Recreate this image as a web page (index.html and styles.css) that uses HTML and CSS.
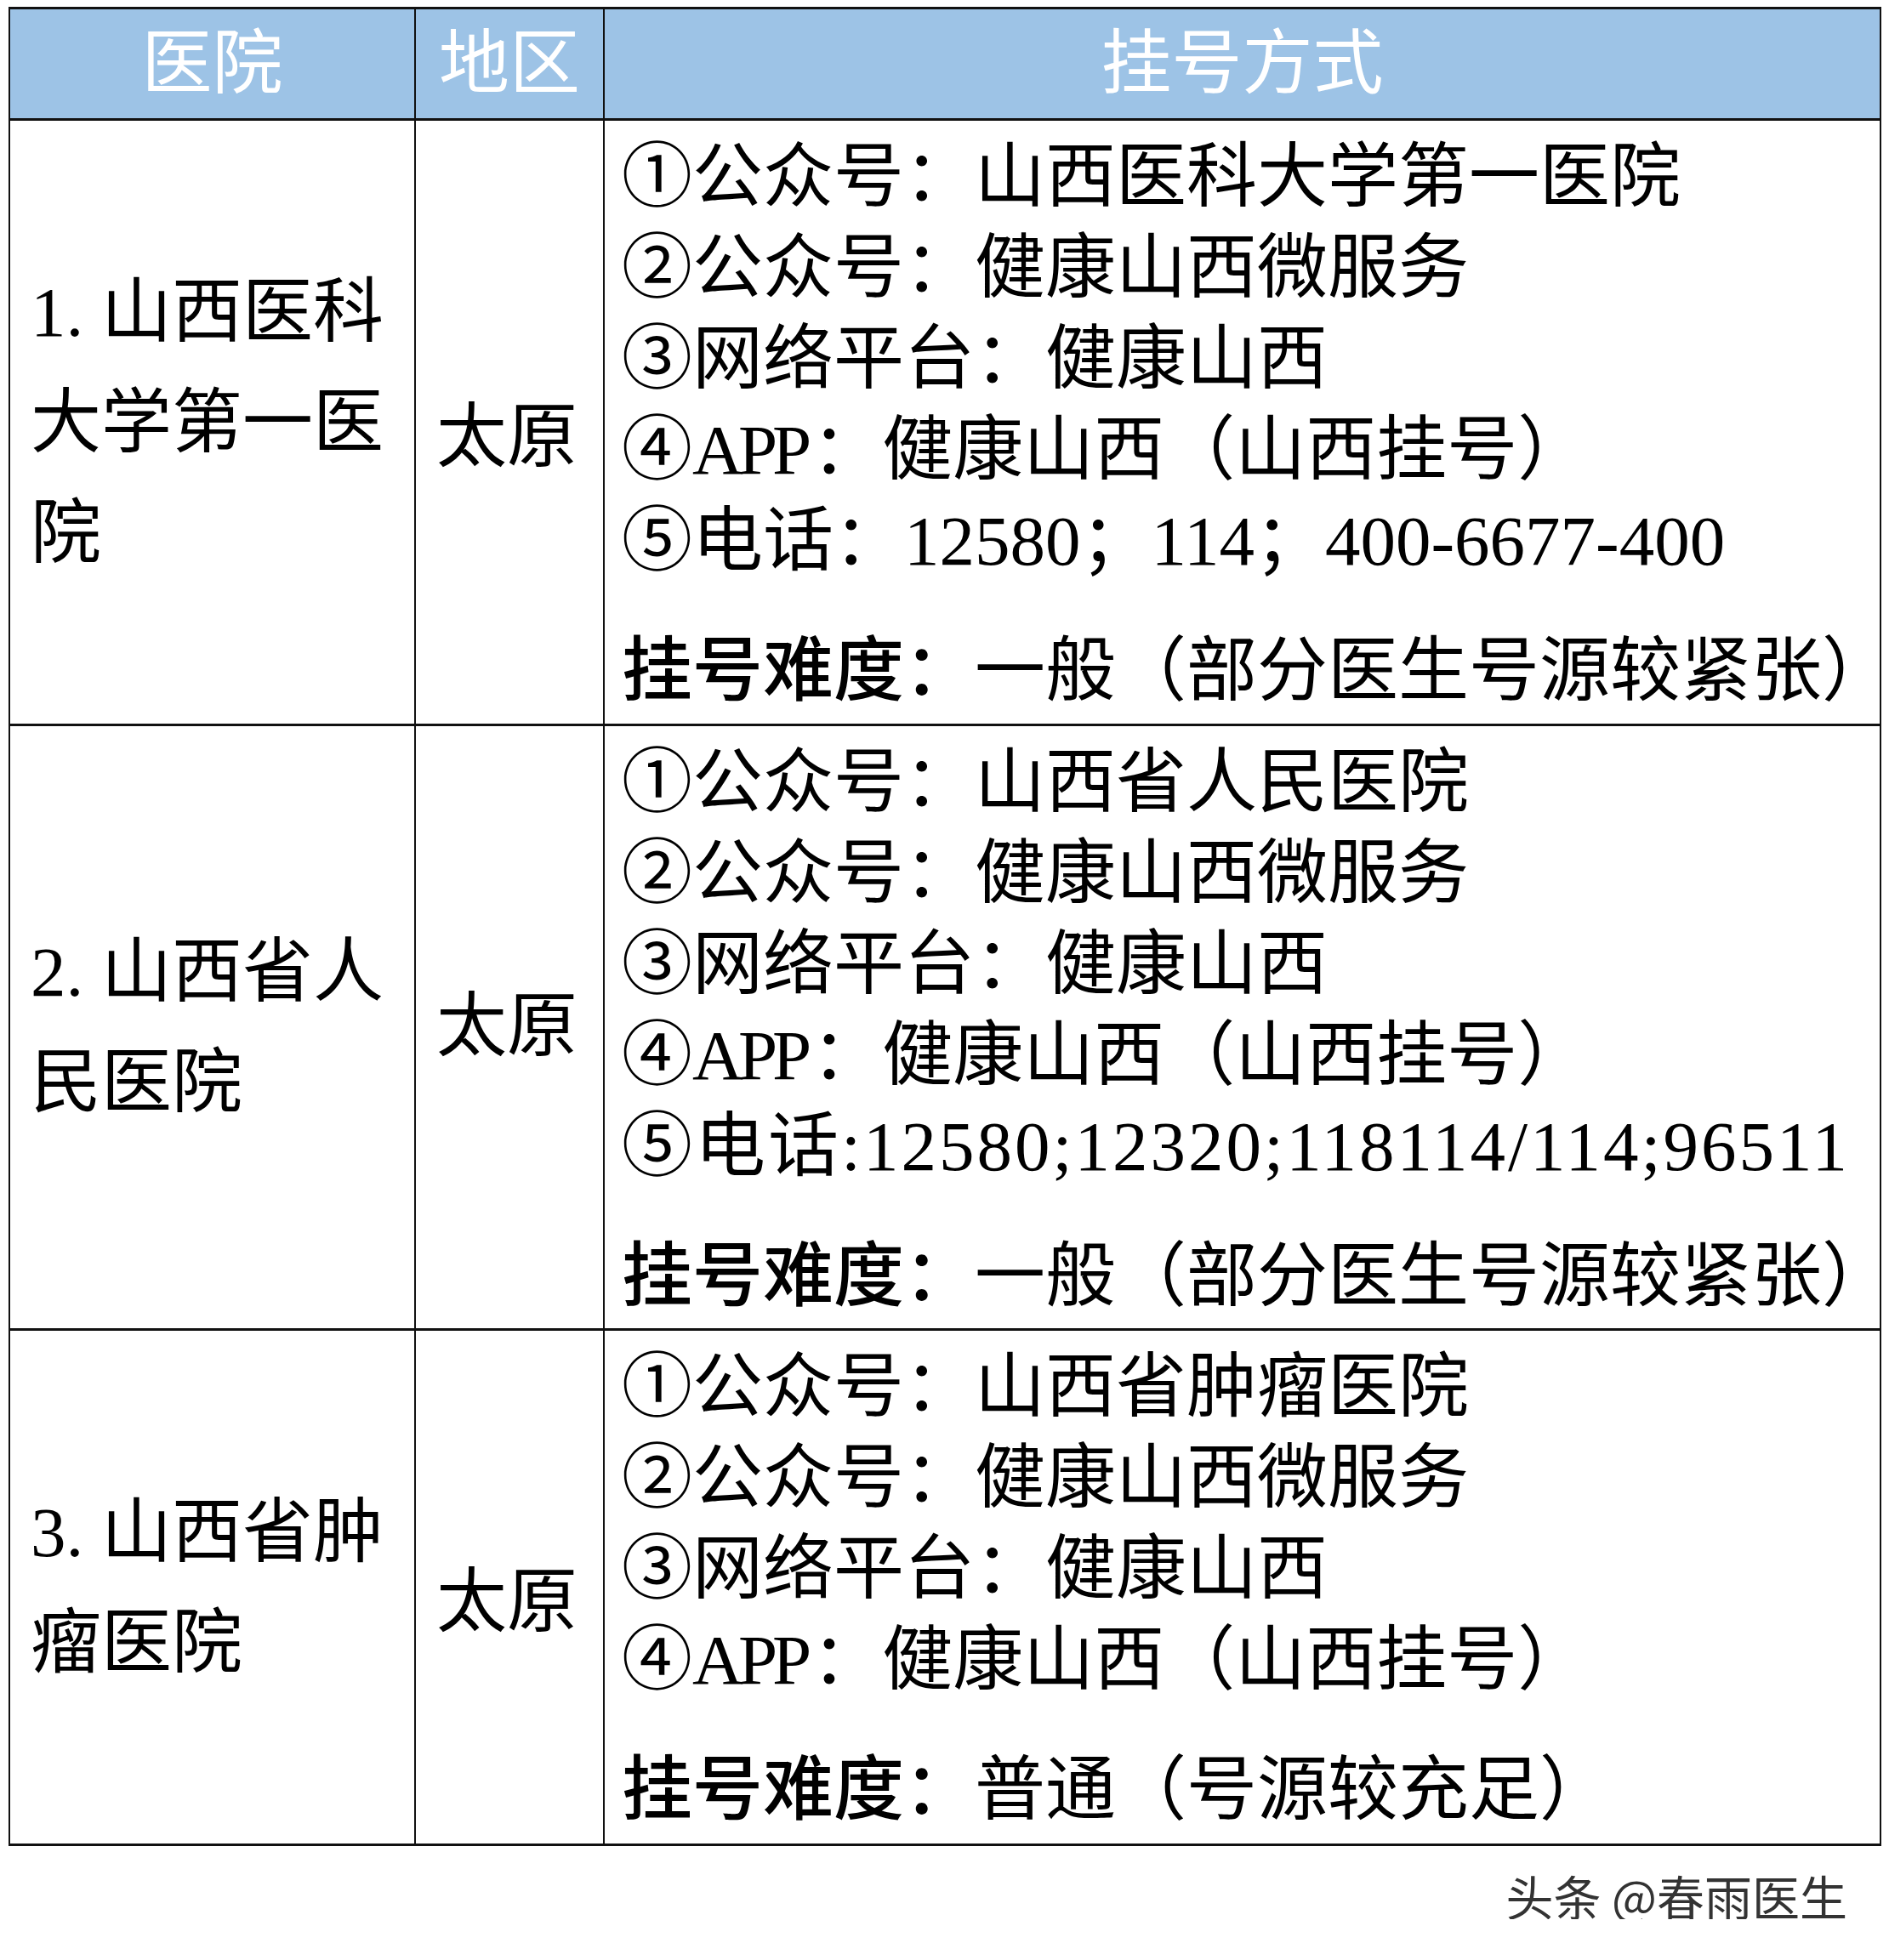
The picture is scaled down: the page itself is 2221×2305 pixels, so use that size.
FILE: index.html
```html
<!DOCTYPE html>
<html lang="zh-CN">
<head>
<meta charset="utf-8">
<title>山西医院挂号方式</title>
<link rel="stylesheet" href="styles.css">
</head>
<body>
<div class="page">
  <table class="grid">
    <colgroup>
      <col class="c-name">
      <col class="c-area">
      <col class="c-way">
    </colgroup>
    <thead>
      <tr>
        <th>医院</th>
        <th>地区</th>
        <th>挂号方式</th>
      </tr>
    </thead>
    <tbody>
      <tr class="r1">
        <td class="name"><span class="idx">1.</span>山西医科<br>大学第一医<br>院</td>
        <td class="area low">太原</td>
        <td class="way">
          <div class="ln">①公众号：山西医科大学第一医院</div>
          <div class="ln">②公众号：健康山西微服务</div>
          <div class="ln">③网络平台：健康山西</div>
          <div class="ln">④<span class="lat">APP</span>：健康山西（山西挂号）</div>
          <div class="ln">⑤电话：12580；114；400-6677-400</div>
          <div class="diff"><b>挂号难度：</b>一般（部分医生号源较紧张）</div>
        </td>
      </tr>
      <tr class="r2">
        <td class="name"><span class="idx">2.</span>山西省人<br>民医院</td>
        <td class="area">太原</td>
        <td class="way">
          <div class="ln">①公众号：山西省人民医院</div>
          <div class="ln">②公众号：健康山西微服务</div>
          <div class="ln">③网络平台：健康山西</div>
          <div class="ln">④<span class="lat">APP</span>：健康山西（山西挂号）</div>
          <div class="ln tight">⑤电话:12580;12320;118114/114;96511</div>
          <div class="diff"><b>挂号难度：</b>一般（部分医生号源较紧张）</div>
        </td>
      </tr>
      <tr class="r3">
        <td class="name"><span class="idx">3.</span>山西省肿<br>瘤医院</td>
        <td class="area low">太原</td>
        <td class="way">
          <div class="ln">①公众号：山西省肿瘤医院</div>
          <div class="ln">②公众号：健康山西微服务</div>
          <div class="ln">③网络平台：健康山西</div>
          <div class="ln">④<span class="lat">APP</span>：健康山西（山西挂号）</div>
          <div class="diff"><b>挂号难度：</b>普通（号源较充足）</div>
        </td>
      </tr>
    </tbody>
  </table>
  <div class="mark">头条 @春雨医生</div>
</div>
</body>
</html>
```
FILE: styles.css
```css
html, body {
  margin: 0;
  padding: 0;
  background: #ffffff;
}

body {
  font-family: "Liberation Serif", "Noto Sans CJK SC", serif;
  color: #000000;
}

.page {
  width: 2221px;
  box-sizing: border-box;
  padding: 8px 11px 0 10px;
}

.grid {
  border-collapse: collapse;
  table-layout: fixed;
  width: 2200px;
  font-size: 83px;
}

.c-name { width: 477px; }
.c-area { width: 222px; }
.c-way  { width: 1501px; }

.grid th,
.grid td {
  border: 2px solid #111111;
  border-top-width: 3px;
  border-bottom-width: 3px;
  padding: 0;
}

.grid th {
  background: #9dc3e6;
  color: #ffffff;
  font-weight: 400;
  height: 128px;
  line-height: 1;
  text-align: center;
  vertical-align: middle;
}

.r1 { height: 712px; }
.r2 { height: 711px; }
.r3 { height: 606px; }

.grid .name {
  vertical-align: middle;
  padding-left: 24px;
  line-height: 130px;
  white-space: nowrap;
}

.idx {
  display: inline-block;
  width: 1em;
}

.grid .area {
  text-align: center;
  vertical-align: middle;
  line-height: 1.2;
  padding-right: 6px;
}

.grid .area.low {
  padding-top: 36px;
}

.grid .way {
  vertical-align: top;
  padding: 13px 0 0 20px;
  line-height: 107px;
  white-space: nowrap;
}

.lat {
  letter-spacing: -6px;
  margin-right: 6px;
}

.ln.tight {
  letter-spacing: 3px;
}

.diff {
  margin-top: 46px;
}

.diff b {
  font-weight: 500;
}

.mark {
  margin-top: 30px;
  padding-right: 38px;
  text-align: right;
  font-family: "Noto Sans CJK SC", sans-serif;
  font-size: 56px;
  line-height: 56px;
  color: #333333;
  text-shadow: 0 0 2px rgba(255, 255, 255, 0.9);
}
```
